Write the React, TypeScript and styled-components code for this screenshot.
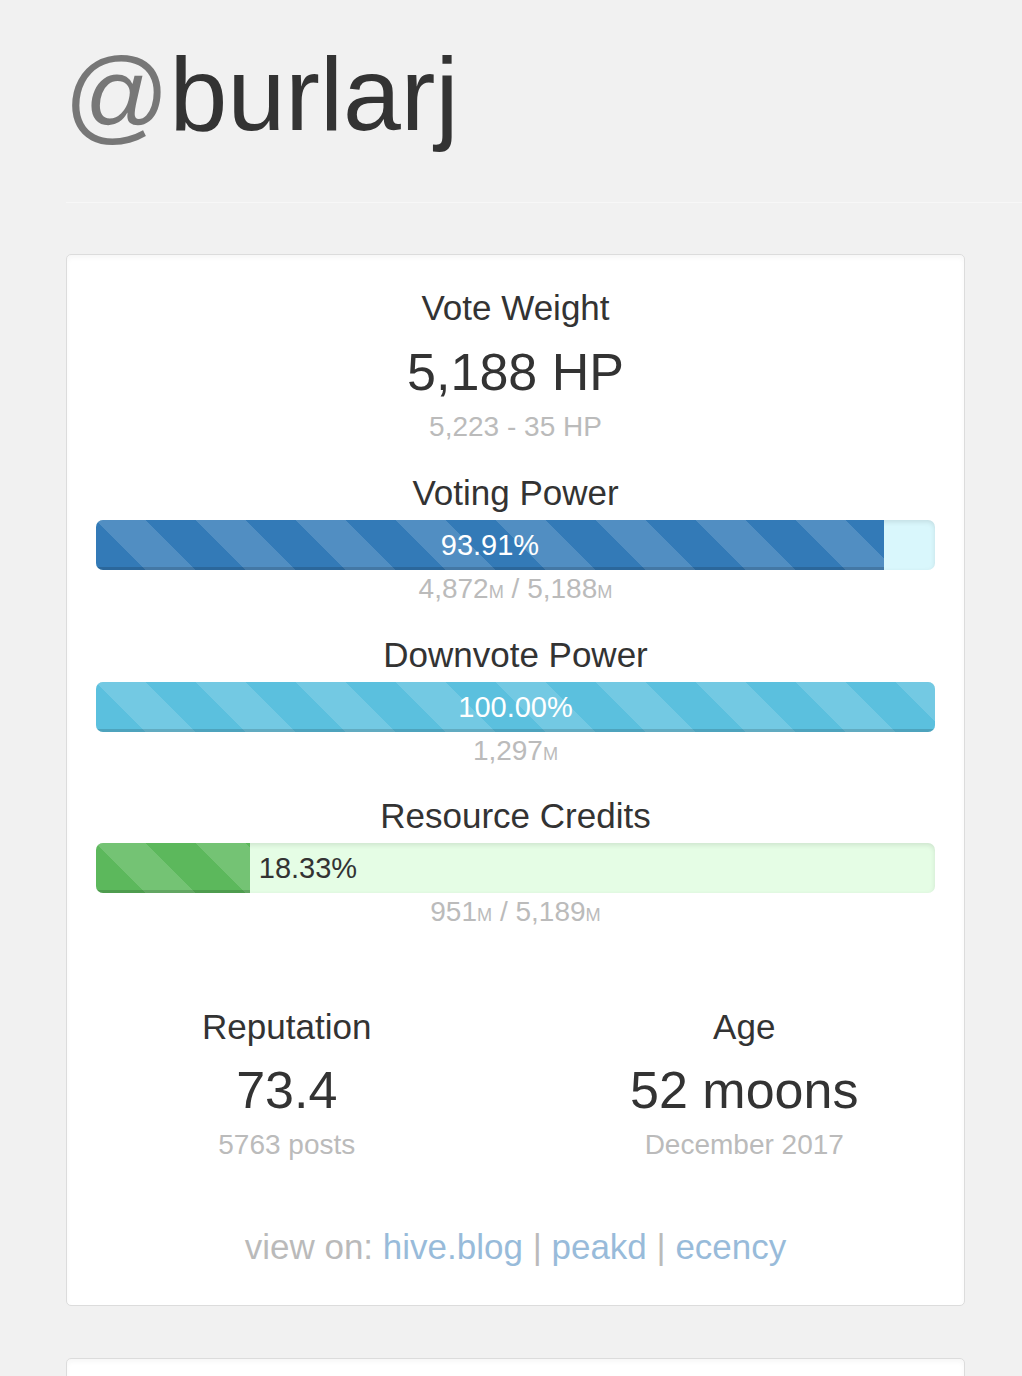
import React from "react";
import styled, { createGlobalStyle } from "styled-components";

const GlobalStyle = createGlobalStyle`
  html, body {
    margin: 0;
    padding: 0;
    background: #f1f1f1;
    font-family: "Liberation Sans", Arial, Helvetica, sans-serif;
    color: #333;
  }
`;

const Page = styled.div`
  padding-left: 66px;
  overflow: hidden;
`;

const Title = styled.h1`
  margin: 38px 0 0 -2px;
  font-size: 104px;
  line-height: 113px;
  font-weight: 400;
  color: #333;
  white-space: nowrap;
`;

const At = styled.span`
  color: #777;
`;

const Rule = styled.hr`
  margin: 51px 0 51px 0;
  border: 0;
  border-top: 1px solid #f7f7f7;
`;

const Card = styled.div`
  width: 899px;
  box-sizing: border-box;
  background: #fff;
  border: 1px solid #dcdcdc;
  border-radius: 5px;
  box-shadow: inset 0 3px 5px rgba(0, 0, 0, 0.035);
  padding: 33px 29px 38px 29px;
  display: flex;
  flex-direction: column;
  text-align: center;
`;

const NextCard = styled(Card)`
  margin-top: 52px;
  height: 120px;
`;

const Heading = styled.div<{ $gap?: number }>`
  font-size: 35px;
  line-height: 40px;
  color: #333;
  margin-top: ${(p) => p.$gap ?? 0}px;
`;

const BigValue = styled.div`
  font-size: 52px;
  line-height: 60px;
  color: #333;
  margin-top: 14px;
`;

const SubValue = styled.div<{ $gap?: number }>`
  font-size: 28px;
  line-height: 32px;
  color: #bbb;
  margin-top: ${(p) => p.$gap ?? 0}px;
`;

const Unit = styled.small`
  font-size: 65%;
`;

const Track = styled.div<{ $bg: string }>`
  margin-top: 7px;
  height: 50px;
  border-radius: 7px;
  overflow: hidden;
  display: flex;
  align-items: stretch;
  background: ${(p) => p.$bg};
  box-shadow: inset 0 2px 5px rgba(0, 0, 0, 0.1);
`;

const Fill = styled.div<{ $color: string }>`
  height: 100%;
  background-color: ${(p) => p.$color};
  background-image: linear-gradient(
    45deg,
    rgba(255, 255, 255, 0.15) 25%,
    transparent 25%,
    transparent 50%,
    rgba(255, 255, 255, 0.15) 50%,
    rgba(255, 255, 255, 0.15) 75%,
    transparent 75%,
    transparent
  );
  background-size: 100px 100px;
  box-shadow: inset 0 -3px 0 rgba(0, 0, 0, 0.15);
  display: flex;
  align-items: center;
  justify-content: center;
  color: #fff;
  font-size: 29px;
  line-height: 50px;
  flex-shrink: 0;
`;

const OuterLabel = styled.div`
  font-size: 29px;
  line-height: 50px;
  color: #333;
  padding-left: 9px;
`;

const StatsRow = styled.div`
  display: grid;
  grid-template-columns: 1fr 1fr;
  margin: 76px -38px 0 -38px;
`;

const Stat = styled.div`
  display: flex;
  flex-direction: column;
  align-items: center;
`;

const StatBig = styled(BigValue)`
  margin-top: 13px;
`;

const Footer = styled.div`
  margin-top: 66px;
  font-size: 35px;
  line-height: 40px;
  color: #777;
  opacity: 0.5;
`;

const Link = styled.a`
  color: #337ab7;
  text-decoration: none;
`;

type BarProps = {
  title: string;
  pct: number;
  color: string;
  track: string;
  gap: number;
  children: React.ReactNode;
};

const PowerBar = ({ title, pct, color, track, gap, children }: BarProps) => {
  const inside = pct >= 30;
  const label = `${pct.toFixed(2)}%`;
  return (
    <>
      <Heading $gap={gap}>{title}</Heading>
      <Track $bg={track}>
        <Fill $color={color} style={{ width: `${pct}%` }}>
          {inside ? label : null}
        </Fill>
        {!inside && <OuterLabel>{label}</OuterLabel>}
      </Track>
      <SubValue $gap={3}>{children}</SubValue>
    </>
  );
};

export default function App() {
  return (
    <>
      <GlobalStyle />
      <Page>
        <Title>
          <At>@</At>burlarj
        </Title>
        <Rule />
        <Card>
          <Heading>Vote Weight</Heading>
          <BigValue>5,188 HP</BigValue>
          <SubValue $gap={9}>5,223 - 35 HP</SubValue>

          <PowerBar title="Voting Power" pct={93.91} color="#337ab7" track="#d9f7fc" gap={30}>
            4,872<Unit>M</Unit> / 5,188<Unit>M</Unit>
          </PowerBar>

          <PowerBar title="Downvote Power" pct={100} color="#5bc0de" track="#d9f7fc" gap={26.5}>
            1,297<Unit>M</Unit>
          </PowerBar>

          <PowerBar title="Resource Credits" pct={18.33} color="#5cb85c" track="#e5fde5" gap={26.5}>
            951<Unit>M</Unit> / 5,189<Unit>M</Unit>
          </PowerBar>

          <StatsRow>
            <Stat>
              <Heading>Reputation</Heading>
              <StatBig>73.4</StatBig>
              <SubValue $gap={9}>5763 posts</SubValue>
            </Stat>
            <Stat>
              <Heading>Age</Heading>
              <StatBig>52 moons</StatBig>
              <SubValue $gap={9}>December 2017</SubValue>
            </Stat>
          </StatsRow>

          <Footer>
            view on: <Link href="#">hive.blog</Link> | <Link href="#">peakd</Link> |{" "}
            <Link href="#">ecency</Link>
          </Footer>
        </Card>
        <NextCard />
      </Page>
    </>
  );
}
